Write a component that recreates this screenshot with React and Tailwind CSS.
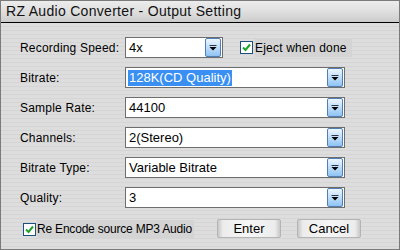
import React from 'react'

function DropButton() {
  return (
    <div className="w-[16px] h-[19px] mr-[1px] rounded-[2px] border border-[#4f7fb6] bg-[linear-gradient(180deg,#eef7ff_0%,#c4e0fb_45%,#8fc3f3_100%)] flex justify-center items-center">
      <svg width="8" height="6" viewBox="0 0 8 6">
        <rect x="0.5" y="0" width="7" height="1" fill="#2a3a52" />
        <polygon points="0.5,2 7.5,2 4,5.5" fill="#000" />
      </svg>
    </div>
  )
}

function Combo({ value, width, selected }) {
  return (
    <div
      className={`h-[21px] shrink-0 bg-white border border-[#6e6e6e] flex items-center justify-between ${width}`}
    >
      <span
        className={`ml-[2px] h-[16px] px-[1px] flex items-center text-[13px] leading-none whitespace-nowrap ${selected ? 'bg-[#3a8ff2] text-white' : 'text-black'}`}
      >
        {value}
      </span>
      <DropButton />
    </div>
  )
}

function CheckBox() {
  return (
    <div className="w-[13px] h-[13px] shrink-0 border border-[#1d4f80] bg-white flex justify-center items-center">
      <svg width="9" height="9" viewBox="0 0 9 9">
        <path d="M1 4.5 L3.5 7 L8 1.5" stroke="#1fa12b" strokeWidth="2" fill="none" />
      </svg>
    </div>
  )
}

function Row({ label, children }) {
  return (
    <li className="flex items-center h-[21px]">
      <div className="w-[105px] shrink-0 whitespace-nowrap text-[12px] tracking-[0.2px] text-black">{label}</div>
      {children}
    </li>
  )
}

function Btn({ children }) {
  return (
    <button className="w-[64px] h-[19px] rounded-[2px] border border-[#b4b4b4] bg-[linear-gradient(90deg,#c8c8c8_0px,#ececec_5px,#f6f6f6_50%,#ececec_calc(100%-5px),#c8c8c8_100%)] text-[13px] text-black flex justify-center items-center">
      {children}
    </button>
  )
}

export default function App() {
  return (
    <div
      className="w-[400px] h-[250px] border border-[#7b7b7b] flex flex-col overflow-hidden"
      style={{ fontFamily: '"Liberation Sans", Arial, sans-serif' }}
    >
      <div className="h-[22px] shrink-0 border-b border-black bg-[linear-gradient(180deg,#ececec_0%,#e2e2e2_40%,#d6d6d6_75%,#cacaca_100%)] flex items-center pl-[5px]">
        <span className="text-[14px] tracking-[0.3px] text-[#111]">RZ Audio Converter - Output Setting</span>
      </div>

      <div className="flex-1 bg-[repeating-linear-gradient(180deg,#dddddd_0px,#dddddd_3px,#d5d5d5_3px,#d5d5d5_4px)] pl-[19px] pt-[14px]">
        <ul className="flex flex-col gap-[9px]">
          <Row label="Recording Speed:">
            <Combo value="4x" width="w-[98px]" />
            <div className="ml-[17px] flex items-center">
              <CheckBox />
              <span className="ml-[2px] pr-[5px] bg-[#d4d4d4] text-[12px] tracking-[0.2px] text-black whitespace-nowrap">Eject when done</span>
            </div>
          </Row>
          <Row label="Bitrate:">
            <Combo value="128K(CD Quality)" width="w-[220px]" selected />
          </Row>
          <Row label="Sample Rate:">
            <Combo value="44100" width="w-[220px]" />
          </Row>
          <Row label="Channels:">
            <Combo value="2(Stereo)" width="w-[220px]" />
          </Row>
          <Row label="Bitrate Type:">
            <Combo value="Variable Bitrate" width="w-[220px]" />
          </Row>
          <Row label="Quality:">
            <Combo value="3" width="w-[220px]" />
          </Row>
        </ul>

        <div className="mt-[11px] flex items-center">
          <div className="w-[197px] shrink-0 pl-[3px] flex items-center mt-[1px]">
            <CheckBox />
            <span className="ml-[1px] pr-[2px] bg-[#d4d4d4] text-[12px] tracking-[-0.2px] text-black whitespace-nowrap">Re Encode source MP3 Audio</span>
          </div>
          <div className="flex gap-[16px]">
            <Btn>Enter</Btn>
            <Btn>Cancel</Btn>
          </div>
        </div>
      </div>
    </div>
  )
}
